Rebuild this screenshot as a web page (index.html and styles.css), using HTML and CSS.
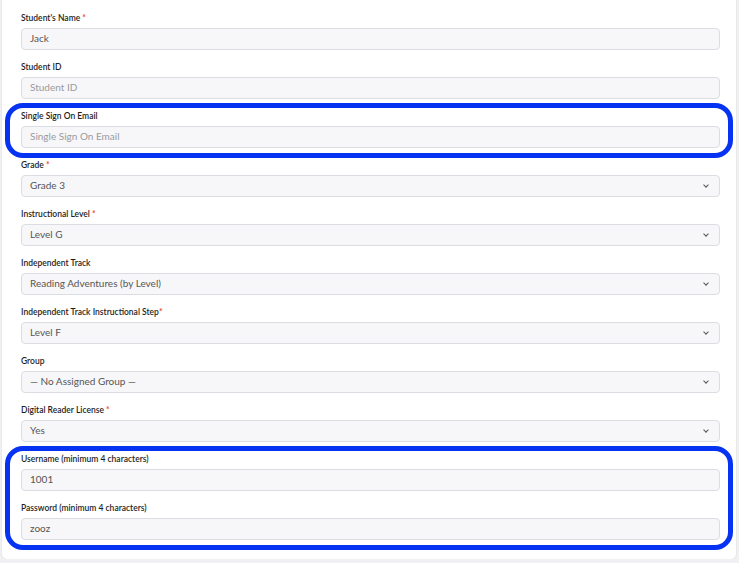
FILE: index.html
```html
<!DOCTYPE html>
<html lang="en">
<head>
  <meta charset="UTF-8" />
  <title>Edit Student</title>
  <link rel="stylesheet" href="styles.css">
</head>
<body>
  <div class="card">
    <form class="form">
      <div class="field">
        <label>Student's Name <span class="req">*</span></label>
        <div class="input">Jack</div>
      </div>
      <div class="field">
        <label>Student ID</label>
        <div class="input placeholder">Student ID</div>
      </div>
      <div class="field highlight">
        <label>Single Sign On Email</label>
        <div class="input placeholder">Single Sign On Email</div>
      </div>
      <div class="field">
        <label>Grade <span class="req">*</span></label>
        <div class="input select">Grade 3</div>
      </div>
      <div class="field">
        <label>Instructional Level <span class="req">*</span></label>
        <div class="input select">Level G</div>
      </div>
      <div class="field">
        <label>Independent Track</label>
        <div class="input select">Reading Adventures (by Level)</div>
      </div>
      <div class="field">
        <label>Independent Track Instructional Step<span class="req">*</span></label>
        <div class="input select">Level F</div>
      </div>
      <div class="field">
        <label>Group</label>
        <div class="input select">&mdash; No Assigned Group &mdash;</div>
      </div>
      <div class="field">
        <label>Digital Reader License <span class="req">*</span></label>
        <div class="input select">Yes</div>
      </div>
      <div class="highlight group">
        <div class="field">
          <label>Username (minimum 4 characters)</label>
          <div class="input">1001</div>
        </div>
        <div class="field">
          <label>Password (minimum 4 characters)</label>
          <div class="input">zooz</div>
        </div>
      </div>
    </form>
  </div>
</body>
</html>
```

FILE: styles.css
```css
* { margin: 0; padding: 0; box-sizing: border-box; }

body {
  background: #f1f1f3;
  font-family: 'Lato', 'Noto Sans', sans-serif;
  color: #222;
  overflow: hidden;
}

.card {
  margin-left: 2px;
  width: 734px;
  background: #fff;
  border-radius: 0 0 5px 5px;
  box-shadow: 0 0 2px rgba(0, 0, 0, 0.12);
  padding: 12px 16px 19px 19px;
}

.form {
  display: flex;
  flex-direction: column;
  gap: 11px;
}

.group {
  display: flex;
  flex-direction: column;
  gap: 11px;
}

.field label {
  display: block;
  font-size: 8.5px;
  font-weight: 600;
  line-height: 12px;
  margin-bottom: 4px;
  color: #1e1e1e;
}

.req {
  color: #e94b35;
  font-weight: 700;
}

.input {
  height: 22px;
  border: 1px solid #dcdde2;
  border-radius: 4px;
  background: #f7f7f9;
  padding: 0 8px;
  font-size: 10px;
  line-height: 19px;
  color: #555;
}

.input.placeholder {
  color: #9a9a9e;
}

.select {
  position: relative;
}

.select::after {
  content: "";
  position: absolute;
  right: 11px;
  top: 7px;
  width: 3px;
  height: 3px;
  border-right: 1px solid #555;
  border-bottom: 1px solid #555;
  transform: rotate(45deg);
}

.highlight {
  position: relative;
}

.highlight::after {
  content: "";
  position: absolute;
  top: -7px;
  left: -16px;
  right: -13px;
  bottom: -10px;
  border: 5px solid #0633f2;
  border-radius: 18px;
  pointer-events: none;
}
```
